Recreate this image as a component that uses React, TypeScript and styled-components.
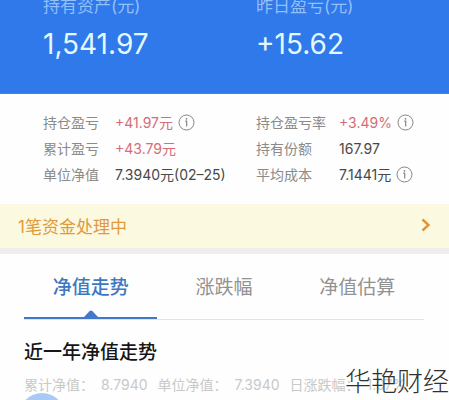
import React, { useState } from 'react';
import styled, { createGlobalStyle } from 'styled-components';

const GlobalStyle = createGlobalStyle`
  * { box-sizing: border-box; }
  html, body { margin: 0; overflow: hidden; }
  body {
    background: #fefefe;
    color: #4a4a4a;
    font-family: Inter, "Noto Sans CJK SC", sans-serif;
  }
`;

const Page = styled.main`
  position: relative;
  height: 100vh;
  overflow: hidden;
`;

const Summary = styled.header`
  display: grid;
  grid-template-columns: 213fr 193fr;
  padding: 0 0 32px 43px;
  background: #2f79ea;
  border-bottom: 1px solid #4a83cf;
`;

const SummaryLabel = styled.div`
  color: #93bffa;
  font-size: 17px;
  line-height: 12px;
  white-space: nowrap;
`;

const SummaryValue = styled.div`
  margin-top: 15px;
  color: #e4f8ff;
  font-size: 28px;
  line-height: 34px;
`;

const Stats = styled.section`
  display: grid;
  grid-template-columns: 213fr 193fr;
  padding: 15px 0 17px 43px;
`;

const StatList = styled.dl<{ $labelWidth: number }>`
  display: grid;
  grid-template-columns: ${({ $labelWidth }) => $labelWidth}px 1fr;
  grid-auto-rows: 26px;
  align-items: center;
  margin: 0;
  font-size: 14px;
  white-space: nowrap;
`;

const StatLabel = styled.dt`
  color: #8b8b89;
`;

const StatValue = styled.dd<{ $gain?: boolean }>`
  display: flex;
  align-items: center;
  gap: 5px;
  margin: 0;
  color: ${({ $gain }) => ($gain ? '#d66c76' : '#484848')};
`;

const InfoButton = styled.button`
  display: flex;
  padding: 0;
  border: 0;
  background: none;
  color: #858585;
`;

const Notice = styled.a`
  display: flex;
  align-items: center;
  justify-content: space-between;
  height: 50px;
  padding: 0 17px 2px 18px;
  border-bottom: 6px solid #eeeeee;
  background: #fbf9e0;
  color: #df9a3d;
  font-size: 17px;
  text-decoration: none;
`;

const Tabs = styled.div`
  display: grid;
  grid-template-columns: repeat(3, 1fr);
  margin: 0 25px 0 24px;
  border-bottom: 1px solid #e2e2e2;
`;

const Tab = styled.button<{ $active: boolean }>`
  position: relative;
  height: 65px;
  padding: 0;
  border: 0;
  border-bottom: 2px solid ${({ $active }) => ($active ? '#4277c9' : 'transparent')};
  background: none;
  color: ${({ $active }) => ($active ? '#3d78bf' : '#929292')};
  font: inherit;
  font-size: 19px;
  font-weight: ${({ $active }) => ($active ? 500 : 400)};
`;

const TabMarker = styled.svg`
  position: absolute;
  bottom: 0;
  left: 50%;
  transform: translateX(-50%);
`;

const Trend = styled.section`
  padding: 19px 0 0 24px;
`;

const TrendTitle = styled.h2`
  margin: 0;
  color: #161616;
  font-size: 19px;
  font-weight: 500;
  line-height: 28px;
`;

const TrendFigures = styled.div`
  display: flex;
  gap: 10px;
  margin-top: 8px;
  color: #c9c9c9;
  font-size: 14px;
  line-height: 20px;
  white-space: nowrap;
`;

const Figure = styled.span`
  display: flex;
  gap: 7px;
`;

const FloatingDot = styled.svg`
  position: absolute;
  top: 393px;
  left: 19px;
`;

const Watermark = styled.div`
  position: absolute;
  right: 0;
  bottom: 0;
  color: #303030;
  font-family: "Noto Sans CJK SC", sans-serif;
  font-size: 26px;
  font-weight: 200;
  line-height: 40px;
`;

function Info({ label }: { label: string }) {
  return (
    <InfoButton type="button" aria-label={label}>
      <svg width="17" height="17" viewBox="0 0 17 17" fill="none" stroke="currentColor">
        <circle cx="8.5" cy="8.5" r="7.5" />
        <path d="M7.2 7.2h1.5V12.6" strokeWidth="1.2" />
        <circle cx="8.5" cy="4.8" r="0.9" fill="currentColor" stroke="none" />
      </svg>
    </InfoButton>
  );
}

interface Stat {
  label: string;
  value: string;
  gain?: boolean;
  info?: boolean;
}

const holdings: Stat[] = [
  { label: '持仓盈亏', value: '+41.97元', gain: true, info: true },
  { label: '累计盈亏', value: '+43.79元', gain: true },
  { label: '单位净值', value: '7.3940元(02–25)' },
];

const rates: Stat[] = [
  { label: '持仓盈亏率', value: '+3.49%', gain: true, info: true },
  { label: '持有份额', value: '167.97' },
  { label: '平均成本', value: '7.1441元', info: true },
];

const tabs = ['净值走势', '涨跌幅', '净值估算'];

const figures = [
  ['累计净值：', '8.7940'],
  ['单位净值：', '7.3940'],
  ['日涨跌幅：', '1.07%'],
];

function StatColumn({ items, labelWidth }: { items: Stat[]; labelWidth: number }) {
  return (
    <StatList $labelWidth={labelWidth}>
      {items.map((item) => (
        <React.Fragment key={item.label}>
          <StatLabel>{item.label}</StatLabel>
          <StatValue $gain={item.gain}>
            {item.value}
            {item.info && <Info label={`${item.label}说明`} />}
          </StatValue>
        </React.Fragment>
      ))}
    </StatList>
  );
}

export default function App() {
  const [active, setActive] = useState(0);
  return (
    <Page>
      <GlobalStyle />
      <Summary>
        <div>
          <SummaryLabel>持有资产(元)</SummaryLabel>
          <SummaryValue>1,541.97</SummaryValue>
        </div>
        <div>
          <SummaryLabel>昨日盈亏(元)</SummaryLabel>
          <SummaryValue>+15.62</SummaryValue>
        </div>
      </Summary>
      <Stats>
        <StatColumn items={holdings} labelWidth={72} />
        <StatColumn items={rates} labelWidth={83} />
      </Stats>
      <Notice href="#pending">
        1笔资金处理中
        <svg width="12" height="14" viewBox="0 0 12 14" fill="none" stroke="#e0953a" strokeWidth="2.4">
          <path d="M2.5 1.5L8.5 7l-6 5.5" />
        </svg>
      </Notice>
      <Tabs role="tablist">
        {tabs.map((name, index) => (
          <Tab
            key={name}
            type="button"
            role="tab"
            aria-selected={index === active}
            $active={index === active}
            onClick={() => setActive(index)}
          >
            {name}
            {index === active && (
              <TabMarker width="14" height="7" viewBox="0 0 14 7" fill="#4277c9">
                <path d="M0 7L5.5 1.2Q7 0 8.5 1.2L14 7Z" />
              </TabMarker>
            )}
          </Tab>
        ))}
      </Tabs>
      <Trend>
        <TrendTitle>近一年净值走势</TrendTitle>
        <TrendFigures>
          {figures.map(([label, value]) => (
            <Figure key={label}>
              <span>{label}</span>
              <span>{value}</span>
            </Figure>
          ))}
        </TrendFigures>
      </Trend>
      <FloatingDot width="46" height="46" viewBox="0 0 46 46" fill="#a9caf7" aria-hidden="true">
        <circle cx="23" cy="23" r="23" />
      </FloatingDot>
      <Watermark>华艳财经</Watermark>
    </Page>
  );
}
